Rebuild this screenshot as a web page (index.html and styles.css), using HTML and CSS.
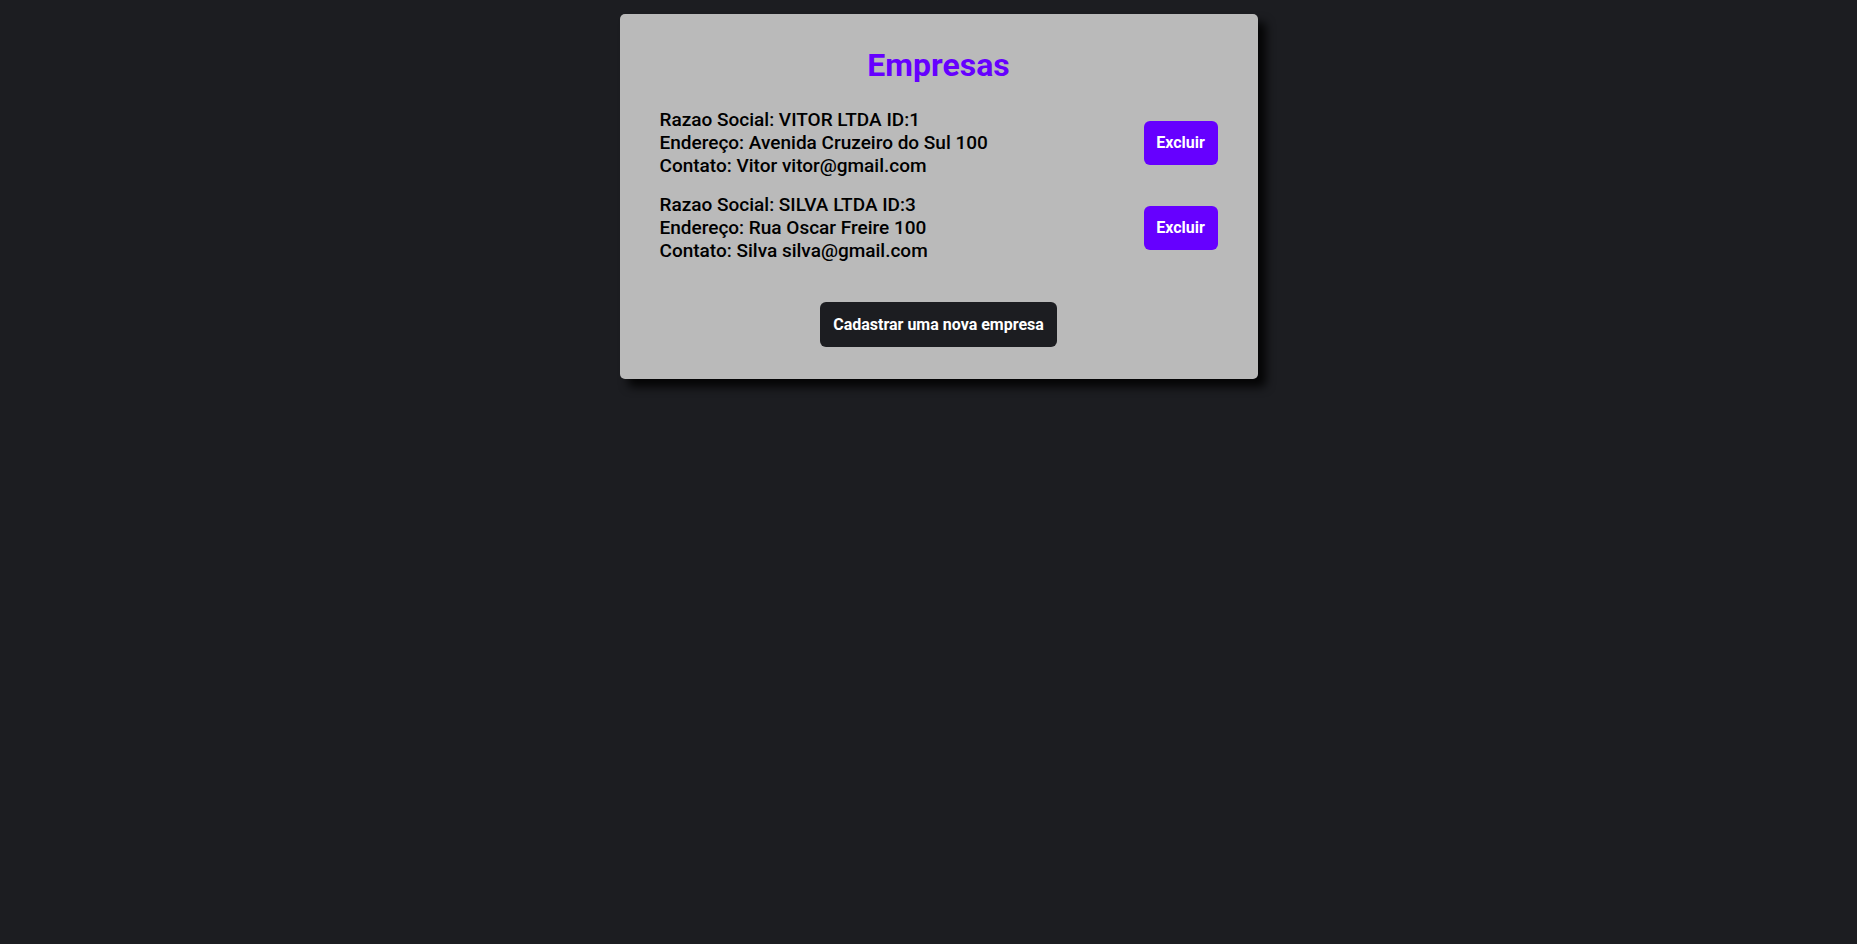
FILE: index.html
```html
<!DOCTYPE html>
<html lang="pt-BR">
<head>
<meta charset="utf-8">
<title>Empresas</title>
<link rel="stylesheet" href="styles.css">
</head>
<body>
<main class="page">
  <section class="card">
    <h1 class="title">Empresas</h1>
    <ul class="list">
      <li class="item">
        <div class="info">
          <div>Razao Social: VITOR LTDA ID:1</div>
          <div>Endereço: Avenida Cruzeiro do Sul 100</div>
          <div>Contato: Vitor vitor@gmail.com</div>
        </div>
        <button class="btn-delete">Excluir</button>
      </li>
      <li class="item">
        <div class="info">
          <div>Razao Social: SILVA LTDA ID:3</div>
          <div>Endereço: Rua Oscar Freire 100</div>
          <div>Contato: Silva silva@gmail.com</div>
        </div>
        <button class="btn-delete">Excluir</button>
      </li>
    </ul>
    <div class="actions">
      <button class="btn-new">Cadastrar uma nova empresa</button>
    </div>
  </section>
</main>
</body>
</html>
```
FILE: styles.css
```css
* { box-sizing: border-box; }
html, body {
  margin: 0;
  padding: 0;
  background: #1c1d21;
  font-family: Roboto, "Liberation Sans", sans-serif;
  height: 100%;
}
.page {
  display: flex;
  justify-content: center;
  align-items: flex-start;
  padding: 14px 0 0 20px;
}
.card {
  width: 638px;
  background: #bababa;
  border-radius: 5px;
  padding: 32px 40px 32px 40px;
  box-shadow: 8px 8px 10px rgba(0, 0, 0, 0.85);
}
.title {
  margin: 0;
  text-align: center;
  color: #6600ff;
  font-size: 32px;
  font-weight: 700;
  line-height: normal;
}
.list {
  list-style: none;
  margin: 24px 0 0;
  padding: 0;
  display: flex;
  flex-direction: column;
  gap: 16px;
}
.item {
  display: flex;
  align-items: center;
  justify-content: space-between;
}
.info {
  font-size: 19px;
  font-weight: 500;
  line-height: 23px;
  color: #000;
}
.btn-delete {
  height: 44px;
  width: 74px;
  padding: 0;
  border: none;
  border-radius: 6px;
  background: #6600ff;
  color: #fff;
  font-family: Roboto, "Liberation Sans", sans-serif;
  font-size: 16px;
  font-weight: 700;
}
.actions {
  display: flex;
  justify-content: center;
  margin-top: 40px;
}
.btn-new {
  height: 45px;
  padding: 0 13px;
  border: none;
  border-radius: 6px;
  background: #1c1d21;
  color: #fff;
  font-family: Roboto, "Liberation Sans", sans-serif;
  font-size: 16px;
  font-weight: 700;
}
```
